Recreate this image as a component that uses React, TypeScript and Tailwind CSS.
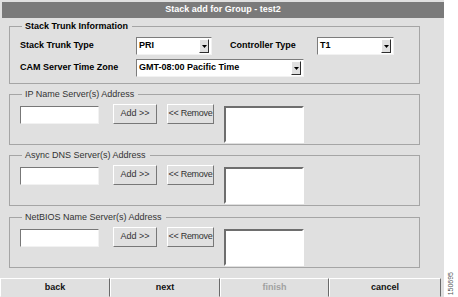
import React from "react"

const Arrow = () => (
  <svg width="5" height="3" viewBox="0 0 5 3">
    <path d="M0 0h5L2.5 3z" fill="#000" />
  </svg>
)

function Select({ value, width }: { value: string; width: string }) {
  return (
    <div
      className={`flex h-[18px] items-stretch border border-t-[#7c7c7c] border-l-[#7c7c7c] border-b-[#f2f2f2] border-r-[#f2f2f2] bg-white ${width}`}
    >
      <span className="flex flex-1 items-center pl-[2px] text-[9px] font-bold text-black">{value}</span>
      <div className="my-[1px] mr-[2px] flex w-[10px] items-center justify-center border border-t-white border-l-white border-r-[#2e2e2e] border-b-[#2e2e2e] bg-[#e0e0e0]">
        <Arrow />
      </div>
    </div>
  )
}

function AddressFrame({ title, top }: { title: string; top: string }) {
  return (
    <fieldset className={`ml-[9px] w-[411px] border border-[#a5a5a5] ${top}`}>
      <legend className="ml-[12px] pl-[3px] pr-[4px] text-[9px] leading-[11px] text-[#333]">{title}</legend>
      <div className="flex items-start pt-[4px] pb-[1px] pl-[10px]">
        <div className="mt-[2px] h-[18px] w-[79px] border border-t-[#777] border-l-[#777] border-b-[#f2f2f2] border-r-[#f2f2f2] bg-white" />
        <button className="ml-[14px] h-[20px] w-[44px] border border-t-white border-l-white border-r-[#777] border-b-[#777] bg-[#e0e0e0] text-[9px] text-[#333]">
          Add &gt;&gt;
        </button>
        <button className="ml-[10px] h-[20px] w-[47px] whitespace-nowrap border border-t-white border-l-white border-r-[#777] border-b-[#777] bg-[#e0e0e0] px-0 text-center text-[9px] tracking-[-0.3px] text-[#333]">
          &lt;&lt; Remove
        </button>
        <div className="ml-[10px] mt-[2px] h-[37px] w-[80px] border-2 border-t-[#6e6e6e] border-l-[#6e6e6e] border-b-white border-r-white bg-white" />
      </div>
    </fieldset>
  )
}

const navButtons = [
  { label: "back", width: "w-[110px]", muted: false },
  { label: "next", width: "w-[110px]", muted: false },
  { label: "finish", width: "w-[109px]", muted: true },
  { label: "cancel", width: "flex-1", muted: false },
]

export default function App() {
  return (
    <div className="flex h-[297px] w-[458px] bg-white font-['Liberation_Sans',Arial,sans-serif]">
      <div className="flex w-[444px] flex-col bg-[#e0e0e0]">
        <div className="ml-[2px] mt-[2px] flex h-[16px] items-center justify-center bg-[#7a7a7a] text-[9px] font-bold text-white">
          Stack add for Group - test2
        </div>

        {/* Stack trunk info */}
        <fieldset className="ml-[9px] mt-[3px] w-[411px] border border-[#a5a5a5]">
          <legend className="ml-[12px] pl-[3px] pr-[4px] text-[9px] font-bold leading-[11px] text-black">
            Stack Trunk Information
          </legend>
          <div className="flex flex-col gap-[4px] pt-[5px] pb-[6px] pl-[10px]">
            <div className="flex items-center">
              <span className="w-[116px] text-[9px] font-bold text-black">Stack Trunk Type</span>
              <Select value="PRI" width="w-[76px]" />
              <span className="ml-[18px] w-[87px] text-[9px] font-bold text-black">Controller Type</span>
              <Select value="T1" width="w-[77px]" />
            </div>
            <div className="flex items-center">
              <span className="w-[116px] text-[9px] font-bold text-black">CAM Server Time Zone</span>
              <Select value="GMT-08:00 Pacific Time" width="w-[168px]" />
            </div>
          </div>
        </fieldset>

        <AddressFrame title="IP Name Server(s) Address" top="mt-[5px]" />
        <AddressFrame title="Async DNS Server(s) Address" top="mt-[5px]" />
        <AddressFrame title="NetBIOS Name Server(s) Address" top="mt-[6px]" />

        <div className="mt-auto flex h-[19px] w-[441px]">
          {navButtons.map((b) => (
            <button
              key={b.label}
              className={`${b.width} border border-t-white border-l-white border-r-[#6a6a6a] border-b-[#e0e0e0] bg-[#e0e0e0] text-[9px] font-bold ${b.muted ? "text-[#a0a0a0]" : "text-[#111]"}`}
            >
              {b.label}
            </button>
          ))}
        </div>
      </div>
      <div className="flex flex-1 flex-col justify-end pb-[2px] pl-[3px]">
        <span className="rotate-180 text-[7px] leading-[8px] text-[#555] [writing-mode:vertical-rl]">150695</span>
      </div>
    </div>
  )
}
